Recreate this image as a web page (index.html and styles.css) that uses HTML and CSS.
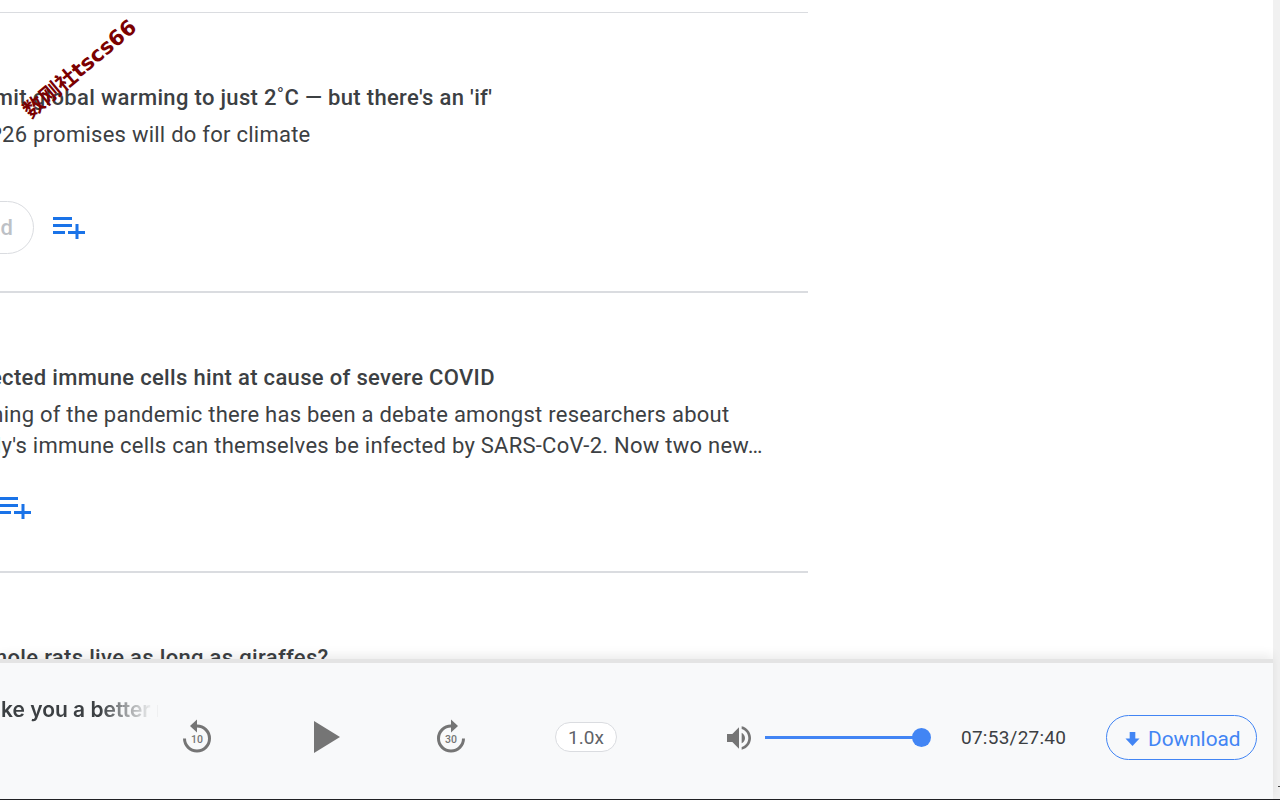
FILE: index.html
```html
<!DOCTYPE html>
<html lang="en">
<head>
<meta charset="utf-8">
<title>Podcast</title>
<link rel="stylesheet" href="styles.css">
</head>
<body>
<div class="viewport">
  <main class="feed">
    <article class="item item-first">
      <h2 class="title shift-a">limit global warming to just 2˚C — but there's an 'if'</h2>
      <p class="desc"><span class="line shift-b">COP26 promises will do for climate</span></p>
      <div class="actions">
        <span class="pill"><span class="pill-text">Download</span></span>
        <svg class="add add-a" viewBox="0 0 32 22" aria-hidden="true"><path d="M0 0h19v3H0zM0 7h19v3H0zM0 14h12v3H0zM15 14h7.500V7h3v7h6.500v3h-6.500v5h-3v-5h-7.500z"/></svg>
      </div>
    </article>
    <article class="item">
      <h2 class="title shift-c">Infected immune cells hint at cause of severe COVID</h2>
      <p class="desc"><span class="line shift-d">Since the beginning of the pandemic there has been a debate amongst researchers about</span><span class="line shift-e">the body's immune cells can themselves be infected by SARS-CoV-2. Now two new…</span></p>
      <div class="actions">
        <svg class="add add-b" viewBox="0 0 32 22" aria-hidden="true"><path d="M0 0h19v3H0zM0 7h19v3H0zM0 14h12v3H0zM15 14h7.500V7h3v7h6.500v3h-6.500v5h-3v-5h-7.500z"/></svg>
      </div>
    </article>
    <article class="item">
      <h2 class="title shift-f">mole rats live as long as giraffes?</h2>
    </article>
  </main>
  <div class="watermark">数刚社tscs66</div>
  <aside class="scrollbar"></aside>
  <footer class="player">
    <div class="now"><span class="now-text">make you a better runner</span></div>
    <svg class="skip skip-back" viewBox="0 0 30 36" aria-hidden="true">
      <path class="skip-arc" d="M2.500 20.500a12.500 12.500 0 1 0 12.500-12.500"/>
      <path class="skip-head" d="M15 1.500v13l-7-6.500z"/>
      <text class="skip-num" x="15" y="25">10</text>
    </svg>
    <svg class="play" viewBox="0 0 26 32" aria-hidden="true"><path d="M0 0l26 16L0 32z"/></svg>
    <svg class="skip skip-fwd" viewBox="0 0 30 36" aria-hidden="true">
      <path class="skip-arc" d="M27.500 20.500a12.500 12.500 0 1 1 -12.500 -12.500"/>
      <path class="skip-head" d="M15 1.500v13l7-6.500z"/>
      <text class="skip-num" x="15" y="25">30</text>
    </svg>
    <span class="speed">1.0x</span>
    <svg class="volume" viewBox="3 3 18 18" aria-hidden="true"><path d="M3 9v6h4l5 5V4L7 9H3zm13.500 3c0-1.770-1.020-3.290-2.500-4.030v8.050c1.480-.73 2.500-2.250 2.500-4.020zM14 3.230v2.060c2.890.86 5 3.540 5 6.710s-2.110 5.850-5 6.710v2.060c4.010-.91 7-4.490 7-8.770s-2.990-7.860-7-8.770z"/></svg>
    <div class="slider"><span class="thumb"></span></div>
    <span class="time">07:53/27:40</span>
    <a class="download" href="#">
      <svg class="dl-icon" viewBox="0 0 16 16" aria-hidden="true"><path d="M5 0h6v7h4.500L8 15 .5 7H5z"/></svg>
      <span class="dl-text">Download</span>
    </a>
  </footer>
</div>
</body>
</html>
```
FILE: styles.css
```css
* { box-sizing: border-box; }
html, body { margin: 0; height: 100%; overflow: hidden; background: #fff; }
body { font-family: Roboto, "Noto Sans CJK SC", sans-serif; color: #3c4043; }
.viewport { position: relative; width: 1280px; height: 800px; overflow: hidden; }

.feed { width: 808px; padding-top: 12px; overflow: hidden; }
.item { height: 280px; border-top: 2px solid #dadce0; padding-top: 70px; }
.item-first { height: 279px; border-top-width: 1px; }
.title { margin: 0; font-size: 22px; letter-spacing: .33px; line-height: 30px; font-weight: 500; color: #3c4043; white-space: nowrap; }
.desc { margin: 6px 0 0; min-height: 62px; font-size: 22px; letter-spacing: .25px; line-height: 31px; color: #3c4043; }
.line { display: block; white-space: nowrap; }
.shift-a { margin-left: -18px; }
.shift-b { margin-left: -42px; }
.shift-c { margin-left: -37px; }
.shift-d { margin-left: -162px; }
.shift-e { margin-left: -74px; }
.shift-f { margin-left: -12px; }

.actions { display: flex; align-items: center; height: 53px; margin-top: 20px; }
.pill { display: flex; align-items: center; justify-content: flex-end; width: 100px; height: 53px; margin-left: -66px; padding-right: 20px; border: 1px solid #dadce0; border-radius: 27px; }
.pill-text { font-size: 22px; font-weight: 500; color: #bdc1c6; }
.add { width: 32px; height: 22px; fill: #1a73e8; flex: none; }
.add-a { margin-left: 19px; }
.add-b { margin-left: -1px; }

.watermark { position: absolute; left: 10px; top: 54px; font-family: "DejaVu Sans", "Noto Sans CJK SC", sans-serif; font-size: 21px; line-height: 30px; font-weight: 700; color: #7b0000; white-space: nowrap; transform: rotate(-40deg); }

.scrollbar { position: absolute; top: 0; right: 0; bottom: 0; width: 7px; background: #f1f1f1; border-bottom: 1px solid #202124; }
.scrollbar::after { content: ""; position: absolute; right: 0; bottom: 12px; width: 2px; height: 1px; background: #444; }

.player { position: absolute; left: 0; bottom: 0; width: 1273px; height: 141px; display: flex; align-items: center; padding-top: 13px; background: #f8f9fa; border-top: 4px solid #e4e4e4; border-bottom: 1px solid #202124; box-shadow: 0 -4px 10px rgba(0,0,0,.08); }
.now { position: relative; width: 158px; flex: none; margin-top: -56px; height: 28px; overflow: hidden; }
.now-text { position: absolute; left: -30px; top: 0; width: 188px; overflow: hidden; font-family: Inter, sans-serif; font-size: 21px; line-height: 28px; font-weight: 600; color: #3c4043; white-space: nowrap; -webkit-mask-image: linear-gradient(to left, rgba(0,0,0,.08) 8px, rgba(0,0,0,.45) 30px, #000 58px); mask-image: linear-gradient(to left, rgba(0,0,0,.08) 8px, rgba(0,0,0,.45) 30px, #000 58px); }
.skip { width: 30px; height: 36px; flex: none; margin-top: -3px; }
.skip-arc { fill: none; stroke: #757575; stroke-width: 3; }
.skip-head { fill: #757575; }
.skip-num { font-family: Roboto, sans-serif; font-size: 10.500px; font-weight: 500; fill: #757575; text-anchor: middle; }
.skip-back { margin-left: 24px; }
.play { width: 26px; height: 32px; fill: #757575; margin-left: 102px; margin-top: -2px; flex: none; }
.skip-fwd { margin-left: 96px; }
.speed { width: 62px; height: 30px; margin-left: 89px; margin-top: -2px; padding-top: 1px; border: 1px solid #dadce0; border-radius: 15px; background: #fff; font-size: 19px; line-height: 28px; text-align: center; color: #5f6368; flex: none; }
.volume { width: 24px; height: 24px; margin-left: 110px; margin-top: 1px; fill: #757575; flex: none; }
.slider { position: relative; width: 157px; height: 3px; margin-left: 14px; margin-right: 39px; background: #4285f4; flex: none; }
.thumb { position: absolute; right: -9px; top: -8px; width: 19px; height: 19px; border-radius: 50%; background: #4285f4; }
.time { font-size: 19px; letter-spacing: .25px; color: #3c4043; width: 106px; white-space: nowrap; flex: none; }
.download { display: flex; align-items: center; gap: 8px; width: 151px; height: 45px; margin-left: 39px; padding-left: 18px; border: 1px solid #4285f4; border-radius: 23px; font-size: 20.800px; color: #4285f4; text-decoration: none; flex: none; }
.dl-icon { width: 15px; height: 15px; margin-top: 3px; fill: #4285f4; flex: none; }
.dl-text { padding-top: 2px; }
```
